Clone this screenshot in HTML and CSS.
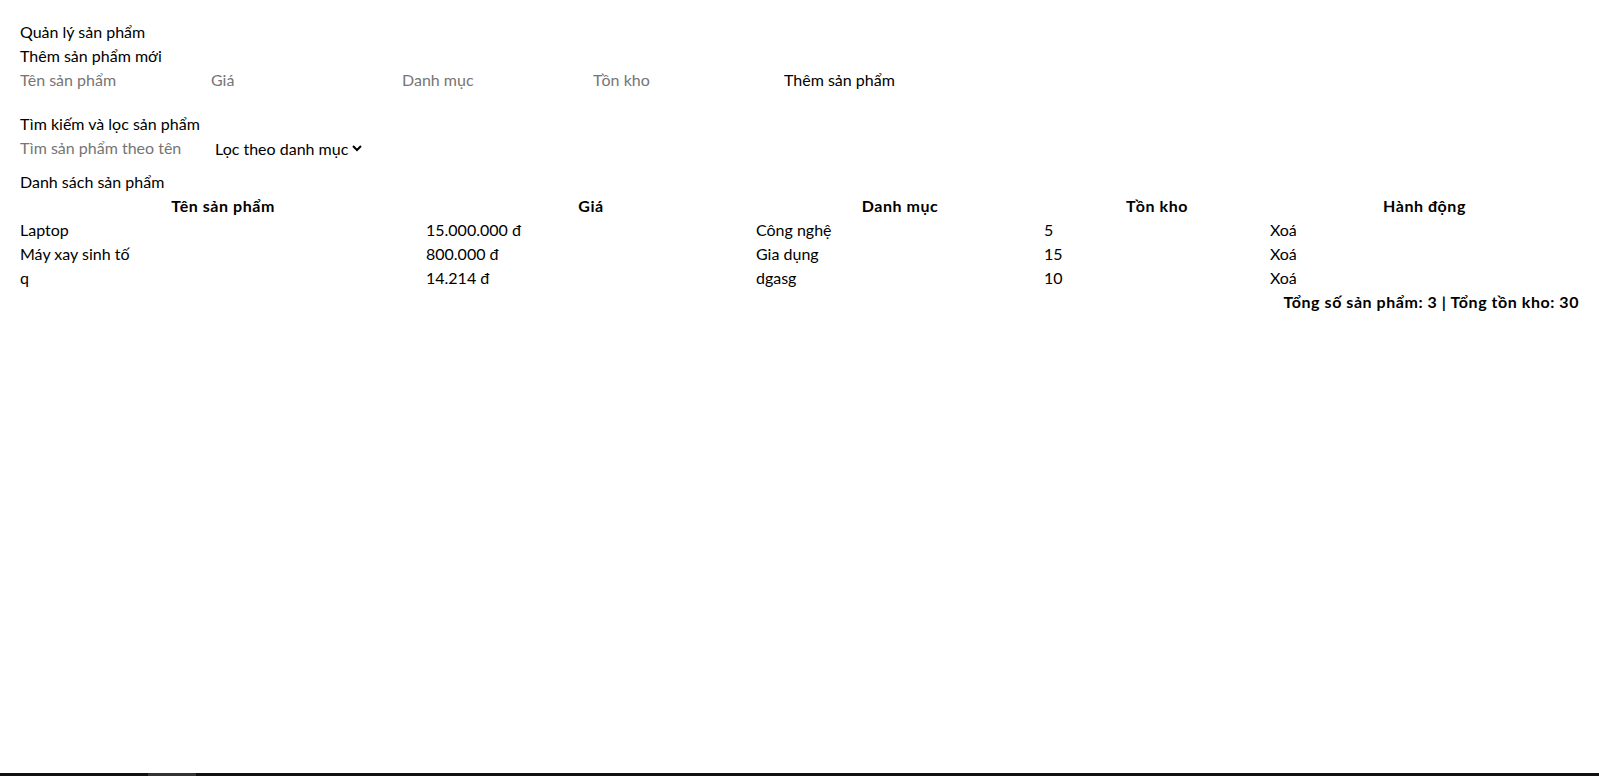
FILE: index.html
```html
<!DOCTYPE html>
<html lang="vi">
<head>
<meta charset="utf-8">
<title>Quản lý sản phẩm</title>
<link rel="stylesheet" href="styles.css">
</head>
<body>
<div class="app">
  <h1 class="title">Quản lý sản phẩm</h1>
  <h2 class="subtitle">Thêm sản phẩm mới</h2>
  <form class="add-form">
    <input class="field" type="text" placeholder="Tên sản phẩm">
    <input class="field" type="number" placeholder="Giá">
    <input class="field" type="text" placeholder="Danh mục">
    <input class="field" type="number" placeholder="Tồn kho">
    <button class="btn" type="button">Thêm sản phẩm</button>
  </form>

  <h2 class="subtitle">Tìm kiếm và lọc sản phẩm</h2>
  <div class="filter-row">
    <input class="field" type="text" placeholder="Tìm sản phẩm theo tên">
    <select class="select">
      <option>Lọc theo danh mục</option>
      <option>Công nghệ</option>
      <option>Gia dụng</option>
      <option>dgasg</option>
    </select>
  </div>

  <h2 class="subtitle">Danh sách sản phẩm</h2>
  <table class="table">
    <colgroup>
      <col class="c1"><col class="c2"><col class="c3"><col class="c4"><col class="c5">
    </colgroup>
    <thead>
      <tr><th>Tên sản phẩm</th><th>Giá</th><th>Danh mục</th><th>Tồn kho</th><th>Hành động</th></tr>
    </thead>
    <tbody>
      <tr><td>Laptop</td><td>15.000.000 đ</td><td>Công nghệ</td><td>5</td><td><button class="link" type="button">Xoá</button></td></tr>
      <tr><td>Máy xay sinh tố</td><td>800.000 đ</td><td>Gia dụng</td><td>15</td><td><button class="link" type="button">Xoá</button></td></tr>
      <tr><td>q</td><td>14.214 đ</td><td>dgasg</td><td>10</td><td><button class="link" type="button">Xoá</button></td></tr>
    </tbody>
  </table>
  <div class="summary">Tổng số sản phẩm: 3 | Tổng tồn kho: 30</div>
</div>
<div class="bottom-bar"><span class="bottom-thumb"></span></div>
</body>
</html>
```
FILE: styles.css
```css
*, *::before, *::after {
  box-sizing: border-box;
  border: 0 solid;
}
html, body {
  margin: 0;
  padding: 0;
  background: #fff;
}
body {
  font-family: Lato, "Noto Sans", sans-serif;
  font-size: 16px;
  line-height: 24px;
  color: #000;
}
.app {
  padding: 20px;
}
.title, .subtitle {
  margin: 0;
  font-size: 16px;
  font-weight: 400;
  line-height: 24px;
}
.add-form {
  display: flex;
  margin: 0 0 20px;
}
.filter-row {
  display: flex;
  align-items: center;
  margin: 0 0 10px;
}
.field {
  width: 191px;
  height: 24px;
  margin: 0;
  padding: 0;
  font: inherit;
  line-height: 24px;
  color: #000;
  background: transparent;
  outline: none;
}
.field::placeholder {
  color: #757575;
  opacity: 1;
}
.field::-webkit-outer-spin-button,
.field::-webkit-inner-spin-button {
  -webkit-appearance: none;
  margin: 0;
}
.field[type=number] {
  -moz-appearance: textfield;
}
.btn, .link {
  margin: 0;
  padding: 0;
  font: inherit;
  line-height: 24px;
  color: #000;
  background: transparent;
  cursor: pointer;
  text-align: left;
}
.select {
  margin: 0;
  padding: 0;
  height: 24px;
  font: inherit;
  line-height: 24px;
  color: #000;
  background: transparent;
  border: 0;
}
.table {
  width: 100%;
  border-collapse: collapse;
  table-layout: fixed;
}
.c1 { width: 406px; }
.c2 { width: 330px; }
.c3 { width: 288px; }
.c4 { width: 226px; }
.table th, .table td {
  padding: 0;
  height: 24px;
  line-height: 24px;
  vertical-align: middle;
}
.table th {
  font-weight: 700;
  letter-spacing: 0.55px;
  text-align: center;
}
.table td {
  text-align: left;
}
.summary {
  font-weight: 700;
  letter-spacing: 0.55px;
  text-align: right;
}
.bottom-bar {
  position: fixed;
  left: 0;
  right: 0;
  bottom: 0;
  height: 3px;
  background: #111;
}
.bottom-thumb {
  position: absolute;
  left: 148px;
  top: 0;
  width: 48px;
  height: 3px;
  background: #333;
}
```
